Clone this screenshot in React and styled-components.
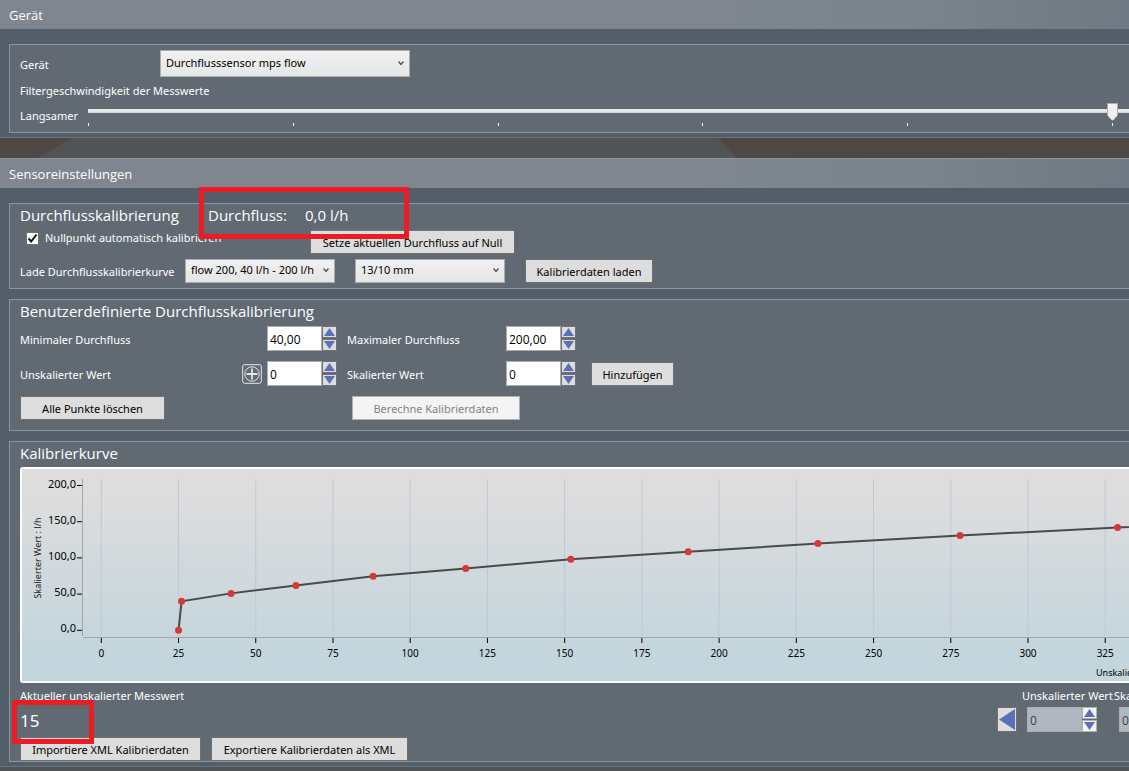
import React from "react";
import styled, { createGlobalStyle } from "styled-components";

const GlobalStyle = createGlobalStyle`
  * {
    box-sizing: border-box;
  }

  body {
    margin: 0;
    background: #525354;
    color: #fff;
    font-family: "Noto Sans", "Open Sans", sans-serif;
    font-size: 12px;
    line-height: 16px;
    overflow: hidden;
  }

  button, input, select {
    font: inherit;
    margin: 0;
  }
`;

const Page = styled.main`
  position: relative;
  min-height: 100vh;
  overflow: hidden;
`;

const SectionTitle = styled.h2`
  margin: 0;
  padding: 0 9px;
  height: ${(props) => (props.$ruled ? 30 : 29)}px;
  border-top: ${(props) => (props.$ruled ? "1px solid #8c959c" : "none")};
  line-height: 30px;
  font-family: "Open Sans", sans-serif;
  font-size: 13px;
  font-weight: 400;
  background: linear-gradient(90deg, #7f868f 62%, #79848b 82%, #6f7983);
`;

const SectionBody = styled.div`
  display: flex;
  flex-direction: column;
  gap: 10px;
  padding: 15px 0 4px 9px;
  background: #525e69;
  border-bottom: 1px solid #69717a;
`;

const Band = styled.div`
  height: 20px;
  background: #4d4846;
`;

const BandShape = styled.div`
  height: 100%;
  margin-left: 37px;
  width: 62%;
  clip-path: polygon(35px 0, calc(100% - 19px) 0, 100% 100%, 0 100%);
  background: #525354;
`;

const Panel = styled.section`
  padding: ${(props) => props.$pad || "0 0 5px 10px"};
  background: #616a73;
  border: 1px solid #8c959c;
  border-right: none;
`;

const PanelTitle = styled.h3`
  display: flex;
  margin: 0;
  height: ${(props) => props.$height}px;
  line-height: 22px;
  font-family: "Open Sans", sans-serif;
  font-size: 15px;
  font-weight: 400;
`;

const TitleText = styled.span`
  width: ${(props) => props.$width}px;
`;

const Row = styled.div`
  display: flex;
  align-items: ${(props) => props.$align || "center"};
  height: ${(props) => props.$height}px;
  white-space: nowrap;
`;

const Label = styled.label`
  flex: none;
  width: ${(props) => (props.$width ? `${props.$width}px` : "auto")};
  padding-top: 2px;
  font-size: 11px;
  white-space: nowrap;
`;

const SelectBox = styled.div`
  position: relative;
  flex: none;
  width: ${(props) => props.$width}px;
  height: ${(props) => props.$height || 24}px;
  margin-right: 20px;

  select {
    appearance: none;
    width: 100%;
    height: 100%;
    padding: 0 20px 2px 5px;
    border: 1px solid #acacac;
    border-radius: 0;
    background: linear-gradient(#f1f1f1, #e5e6e6);
    color: #000;
    font-size: 11px;
  }

  svg {
    position: absolute;
    right: 6px;
    top: 50%;
    margin-top: -3px;
    pointer-events: none;
  }
`;

const Button = styled.button`
  flex: none;
  width: ${(props) => props.$width}px;
  height: 24px;
  padding: 2px 0 0;
  border: 1px solid #707070;
  background: #ddd;
  color: #000;
  font-size: 11px;
  white-space: nowrap;

  &:disabled {
    border-color: #adb2b5;
    background: #f4f4f4;
    color: #838383;
  }
`;

const SliderBox = styled.div`
  flex: 1;
  height: 25px;
  margin-left: 10px;
`;

const Slider = styled.input`
  appearance: none;
  display: block;
  width: 100%;
  height: 18px;
  background: none;

  &::-webkit-slider-runnable-track {
    height: 4px;
    background: #e7eaea;
    border-bottom: 1px solid #d6d6d6;
  }

  &::-webkit-slider-thumb {
    appearance: none;
    width: 11px;
    height: 18px;
    margin-top: -6px;
    background: linear-gradient(#f4f4f4, #ececec);
    border: 1px solid #acacac;
    clip-path: polygon(0 0, 100% 0, 100% 12px, 50% 100%, 0 12px);
  }
`;

const Ticks = styled.div`
  display: flex;
  justify-content: space-between;
  margin: 3px 16px 0 0;

  span {
    width: 1px;
    height: 3px;
    background: #fff;
  }
`;

const CheckLabel = styled.label`
  display: flex;
  flex: none;
  align-items: center;
  gap: 6px;
  width: 290px;
  height: 16px;
  padding-left: 6px;
  font-size: 11px;
`;

const Checkbox = styled.input`
  appearance: none;
  width: 13px;
  height: 13px;
  border: 1px solid #707070;
  background: #fff;

  &:checked {
    background: #fff
      url("data:image/svg+xml,%3Csvg xmlns='http://www.w3.org/2000/svg' viewBox='0 0 11 11'%3E%3Cpath d='M1.5 5.5 4.2 8.5 9.5 1.5' fill='none' stroke='%23111' stroke-width='2'/%3E%3C/svg%3E");
  }
`;

const FieldGrid = styled.div`
  display: grid;
  grid-template-columns: 222px 25px 80px 159px 85px auto;
  grid-auto-rows: 25px;
  row-gap: 10px;
  align-items: center;
  justify-content: start;
`;

const StepperBox = styled.div`
  display: flex;
  flex: none;
  width: 70px;
  height: 25px;

  input {
    width: 55px;
    height: 25px;
    padding: 2px 2px 0;
    border: 1px solid #abadb3;
    border-radius: 0;
    background: #fff;
    color: #000;
    font-family: "Open Sans", sans-serif;
    font-size: 12px;
  }

  input:disabled {
    background: #afb8c0;
    color: #3c4248;
  }
`;

const Arrows = styled.div`
  display: flex;
  flex-direction: column;
  gap: 1px;
`;

const ArrowButton = styled.button`
  display: flex;
  flex: none;
  align-items: center;
  justify-content: center;
  width: ${(props) => props.$width || 15}px;
  height: ${(props) => props.$height || 12}px;
  padding: 0;
  border: 1px solid ${(props) => (props.$light ? "#adb2b5" : "#707070")};
  background: ${(props) => (props.$light ? "#f4f4f4" : "#ddd")};
`;

const IconButton = styled.button`
  width: 20px;
  height: 20px;
  padding: 0;
  border: none;
  background: none;

  svg {
    display: block;
  }
`;

const Actions = styled.div`
  display: flex;
  gap: ${(props) => props.$gap}px;
  margin-top: ${(props) => props.$top}px;
`;

const ChartFrame = styled.div`
  height: 216px;
  border: 2px solid #fff;
  border-right: none;
  border-radius: 3px 0 0 3px;
  background: linear-gradient(#dedddd 10%, #c3d5dd 88%);
  overflow: hidden;

  svg {
    display: block;
    font-size: 11px;
  }
`;

const Readout = styled.output`
  flex: 1;
  padding-top: 2px;
  font-size: 17px;
`;

const RightGroup = styled.div`
  display: flex;
  flex: none;
  align-items: center;
  width: ${(props) => props.$width}px;
  margin-left: auto;
  overflow: hidden;
`;

const PointFields = styled.div`
  display: flex;
  flex: none;
  gap: 22px;
  margin-left: 10px;
`;

// marks a value that the user should look at
const Marker = styled.div`
  position: absolute;
  left: ${(props) => props.$x}px;
  top: ${(props) => props.$y}px;
  width: ${(props) => props.$width}px;
  height: ${(props) => props.$height}px;
  border: 5px solid #ed1c24;
  pointer-events: none;
`;

const Triangle = ({ dir }) => {
  const shapes = {
    up: "0,8 5.5,0 11,8",
    down: "0,0 11,0 5.5,8",
  };
  return (
    <svg width="11" height="8" viewBox="0 0 11 8">
      <polygon points={shapes[dir]} fill="#5b70b8" />
    </svg>
  );
};

const Select = ({ id, width, height, options, label }) => (
  <SelectBox $width={width} $height={height}>
    <select id={id} aria-label={label}>
      {options.map((option) => (
        <option key={option}>{option}</option>
      ))}
    </select>
    <svg width="6" height="5" viewBox="0 0 6 5">
      <path d="M0.5 0.5 3 3.5 5.5 0.5" fill="none" stroke="#555" strokeWidth="1.4" />
    </svg>
  </SelectBox>
);

const Stepper = ({ id, value, disabled, label }) => (
  <StepperBox>
    <input id={id} type="text" defaultValue={value} disabled={disabled} aria-label={label} />
    <Arrows>
      <ArrowButton type="button" aria-label="Erhöhen" $light={disabled}>
        <Triangle dir="up" />
      </ArrowButton>
      <ArrowButton type="button" aria-label="Verringern" $light={disabled}>
        <Triangle dir="down" />
      </ArrowButton>
    </Arrows>
  </StepperBox>
);

const POINTS = [
  [25, 0],
  [26, 40],
  [42, 51],
  [63, 62],
  [88, 74.5],
  [118, 85.5],
  [152, 98],
  [190, 108.5],
  [232, 120],
  [278, 131],
  [329, 142],
  [385, 153],
];
const X_TICKS = [0, 25, 50, 75, 100, 125, 150, 175, 200, 225, 250, 275, 300, 325];
const Y_TICKS = [200, 150, 100, 50, 0];

const xPos = (v) => 79.3 + v * 3.089;
const yPos = (v) => 161.3 - v * 0.724;

const Chart = () => (
  <ChartFrame>
    <svg width="100%" height="212" role="img" aria-label="Kalibrierkurve">
      {X_TICKS.map((x) => (
        <g key={x}>
          <line x1={xPos(x)} x2={xPos(x)} y1="10" y2="168" stroke="#bfc8d8" />
          <line x1={xPos(x)} x2={xPos(x)} y1="169" y2="174" stroke="#000" />
          <text x={xPos(x)} y="188" textAnchor="middle" fontSize="10">
            {x}
          </text>
        </g>
      ))}
      {Y_TICKS.map((y) => (
        <g key={y}>
          <line x1="55" x2="60" y1={yPos(y)} y2={yPos(y)} stroke="#000" />
          <text x="54" y={yPos(y) + 2} textAnchor="end">
            {`${y},0`}
          </text>
        </g>
      ))}
      <path d="M60.5 10V167M61 168.5H2000" stroke="#a3a6a8" fill="none" />
      <polyline
        points={POINTS.map(([x, y]) => `${xPos(x)},${yPos(y)}`).join(" ")}
        fill="none"
        stroke="#4a4a4a"
        strokeWidth="2"
      />
      {POINTS.map(([x, y]) => (
        <circle key={x} cx={xPos(x)} cy={yPos(y)} r="3.5" fill="#d33a36" />
      ))}
      <text transform="translate(19 89) rotate(-90)" textAnchor="middle" fontSize="9" fill="#222">
        Skalierter Wert : l/h
      </text>
      <text x="1074" y="207" fontSize="9">
        Unskalierter Wert
      </text>
    </svg>
  </ChartFrame>
);

const App = () => (
  <Page>
    <GlobalStyle />

    <SectionTitle>Gerät</SectionTitle>
    <SectionBody>
      <Panel $pad="5px 0 5px 10px">
        <Row $height={27}>
          <Label htmlFor="device" $width={140}>
            Gerät
          </Label>
          <Select id="device" width={250} height={27} options={["Durchflusssensor mps flow"]} />
        </Row>
        <Row $height={25}>
          <Label htmlFor="filter">Filtergeschwindigkeit der Messwerte</Label>
        </Row>
        <Row $height={25}>
          <Label htmlFor="filter" $width={58}>
            Langsamer
          </Label>
          <SliderBox>
            <Slider id="filter" type="range" min="0" max="1030" defaultValue="1019" />
            <Ticks>
              {[0, 1, 2, 3, 4, 5].map((tick) => (
                <span key={tick} />
              ))}
            </Ticks>
          </SliderBox>
        </Row>
      </Panel>
    </SectionBody>

    <Band>
      <BandShape />
    </Band>

    <SectionTitle $ruled>Sensoreinstellungen</SectionTitle>
    <SectionBody>
      <Panel>
        <PanelTitle $height={26}>
          <TitleText $width={188}>Durchflusskalibrierung</TitleText>
          <TitleText $width={97}>Durchfluss:</TitleText>
          <TitleText>0,0 l/h</TitleText>
        </PanelTitle>
        <Row $height={29} $align="flex-start">
          <CheckLabel>
            <Checkbox type="checkbox" defaultChecked />
            Nullpunkt automatisch kalibrieren
          </CheckLabel>
          <Button $width={205}>Setze aktuellen Durchfluss auf Null</Button>
        </Row>
        <Row $height={24}>
          <Label htmlFor="curve" $width={165}>
            Lade Durchflusskalibrierkurve
          </Label>
          <Select id="curve" width={150} options={["flow 200, 40 l/h - 200 l/h"]} />
          <Select label="Schlauchgröße" width={150} options={["13/10 mm"]} />
          <Button $width={128}>Kalibrierdaten laden</Button>
        </Row>
      </Panel>

      <Panel $pad="0 0 10px 10px">
        <PanelTitle $height={26}>Benutzerdefinierte Durchflusskalibrierung</PanelTitle>
        <FieldGrid>
          <Label htmlFor="min">Minimaler Durchfluss</Label>
          <span />
          <Stepper id="min" value="40,00" />
          <Label htmlFor="max">Maximaler Durchfluss</Label>
          <Stepper id="max" value="200,00" />
          <span />

          <Label htmlFor="raw">Unskalierter Wert</Label>
          <IconButton type="button" aria-label="Messwert übernehmen">
            <svg width="20" height="20" viewBox="0 0 20 20" fill="none" stroke="#e4e7e9">
              <rect x="0.7" y="0.7" width="18.6" height="18.6" rx="2" />
              <circle cx="10" cy="10" r="7.2" />
              <path d="M10 4.5V15.5M4.5 10H15.5" strokeWidth="1.8" />
            </svg>
          </IconButton>
          <Stepper id="raw" value="0" />
          <Label htmlFor="scaled">Skalierter Wert</Label>
          <Stepper id="scaled" value="0" />
          <Button $width={83}>Hinzufügen</Button>
        </FieldGrid>
        <Actions $gap={187} $top={10}>
          <Button $width={145}>Alle Punkte löschen</Button>
          <Button $width={168} disabled>
            Berechne Kalibrierdaten
          </Button>
        </Actions>
      </Panel>

      <Panel $pad="0 0 0 10px">
        <PanelTitle $height={25}>Kalibrierkurve</PanelTitle>
        <Chart />
        <Row $height={24}>
          <Label as="span">Aktueller unskalierter Messwert</Label>
          <RightGroup $width={107}>
            <Label htmlFor="rawPoint" $width={92}>
              Unskalierter Wert
            </Label>
            <Label htmlFor="scaledPoint">Skalierter Wert</Label>
          </RightGroup>
        </Row>
        <Row $height={25}>
          <Readout>15</Readout>
          <RightGroup $width={132}>
            <ArrowButton type="button" aria-label="Vorheriger Punkt" $width={20} $height={25}>
              <svg width="16" height="21" viewBox="0 0 16 21">
                <polygon points="16,0 16,21 0,10.5" fill="#5b70b8" />
              </svg>
            </ArrowButton>
            <PointFields>
              <Stepper id="rawPoint" value="0" disabled />
              <Stepper id="scaledPoint" value="0,00" disabled />
            </PointFields>
          </RightGroup>
        </Row>
        <Actions $gap={10} $top={5}>
          <Button $width={181}>Importiere XML Kalibrierdaten</Button>
          <Button $width={197}>Exportiere Kalibrierdaten als XML</Button>
        </Actions>
      </Panel>
    </SectionBody>

    <Marker $x={199} $y={187} $width={210} $height={52} />
    <Marker $x={12} $y={700} $width={82} $height={44} />
  </Page>
);

export default App;
